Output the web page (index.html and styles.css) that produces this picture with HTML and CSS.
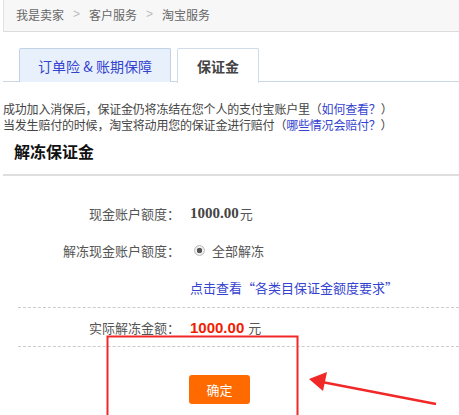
FILE: index.html
```html
<!DOCTYPE html>
<html lang="zh-CN">
<head>
<meta charset="utf-8">
<title>解冻保证金</title>
<link rel="stylesheet" href="styles.css">
</head>
<body>
<div class="page">
  <div class="crumbs">
    <span>我是卖家</span><span class="sep">&gt;</span><span>客户服务</span><span class="sep">&gt;</span><span>淘宝服务</span>
  </div>

  <div class="tabs">
    <div class="tab">订单险 &amp; 账期保障</div>
    <div class="tab active">保证金</div>
  </div>

  <div class="notice">
    <p>成功加入消保后，保证金仍将冻结在您个人的支付宝账户里（<a href="#">如何查看？</a>）</p>
    <p>当发生赔付的时候，淘宝将动用您的保证金进行赔付（<a href="#">哪些情况会赔付？</a>）</p>
  </div>

  <h2 class="title">解冻保证金</h2>

  <div class="form">
    <div class="row">
      <div class="label">现金账户额度：</div>
      <div class="value"><b class="amount">1000.00</b>元</div>
    </div>
    <div class="row">
      <div class="label">解冻现金账户额度：</div>
      <div class="value"><span class="radio"></span>全部解冻</div>
    </div>
    <div class="row link-row">
      <div class="label"></div>
      <div class="value"><a href="#">点击查看“各类目保证金额度要求”</a></div>
    </div>
    <div class="row total">
      <div class="label">实际解冻金额：</div>
      <div class="value"><b class="red">1000.00</b> 元</div>
    </div>
    <div class="actions">
      <button class="btn">确定</button>
    </div>
  </div>

  <svg class="mark" width="459" height="415" viewBox="0 0 459 415">
    <rect x="107.5" y="336.5" width="190" height="100" fill="none" stroke="#f02828" stroke-width="2"/>
    <line x1="436" y1="404" x2="322" y2="382" stroke="#f02828" stroke-width="2.5"/>
    <polygon points="309,379 327,372 323,391" fill="#f02828"/>
  </svg>
</div>
</body>
</html>
```

FILE: styles.css
```css
* { box-sizing: border-box; }

body {
  margin: 0;
  background: #fff;
  font-family: "Noto Sans CJK SC", "Noto Sans", sans-serif;
  font-size: 12px;
  color: #333;
  overflow: hidden;
}

a { color: #3443cf; text-decoration: none; }

.page {
  position: relative;
  width: 459px;
  height: 415px;
  overflow: hidden;
}

/* breadcrumb bar */
.crumbs {
  margin-left: 3px;
  height: 32px;
  background: #f7f7f7;
  border-left: 1px solid #e3e3e3;
  border-bottom: 1px solid #dcdcdc;
  display: flex;
  align-items: center;
  padding: 0 0 3px 12px;
  color: #666;
  font-size: 12px;
}
.crumbs .sep {
  color: #bbb;
  margin: 0 9px;
  font-family: "Liberation Sans", sans-serif;
}

/* tabs */
.tabs {
  margin: 16px 0 0 3px;
  padding-left: 16px;
  display: flex;
  gap: 6px;
  border-bottom: 1px solid #c9d6e3;
  height: 34px;
}
.tab {
  height: 34px;
  width: 152px;
  padding: 0;
  display: flex;
  align-items: center;
  justify-content: center;
  white-space: nowrap;
  border: 1px solid #c0d2e4;
  border-bottom: none;
  border-radius: 2px 2px 0 0;
  background: #e8f1fb;
  color: #3443cf;
  font-size: 14px;
}
.tab.active {
  width: 82px;
  background: #fff;
  color: #444;
  font-weight: bold;
  height: 35px;
  border-color: #cfdbe6;
}

/* notice text */
.notice {
  margin: 19px 0 0 3px;
  line-height: 16px;
  font-size: 12px;
  color: #444;
  letter-spacing: -0.2px;
}
.notice p { margin: 0; }

.title {
  margin: 7px 0 0 3px;
  padding: 0 0 12px 11px;
  font-size: 16px;
  line-height: 22px;
  color: #111;
  border-bottom: 2px solid #dedede;
}

/* form rows */
.form { margin-top: 27px; }
.row {
  display: grid;
  grid-template-columns: 180px 1fr;
  column-gap: 10px;
  align-items: center;
  height: 20px;
  margin-bottom: 17px;
  font-size: 13px;
  color: #555;
}
.label { text-align: right; }
.value { display: flex; align-items: center; }
.amount {
  font-family: "Liberation Serif", serif;
  font-size: 15px;
  color: #444;
  margin-right: 1px;
}
.radio {
  width: 11px;
  height: 11px;
  border: 1px solid #bbb;
  border-radius: 50%;
  background: radial-gradient(circle, #555 0 2.5px, #eee 3px);
  margin: 0 7px 0 4px;
}
.link-row { margin-top: 2px; margin-bottom: 10px; }
.link-row a { font-size: 13px; }

.total {
  margin-left: 18px;
  height: 40px;
  border-top: 1px dashed #ccc;
  border-bottom: 1px dashed #ccc;
  grid-template-columns: 162px 1fr;
  margin-bottom: 0;
}
.total .red {
  color: #f01e00;
  font-size: 15px;
  font-family: "Liberation Sans", sans-serif;
  margin-right: 4px;
}

.actions {
  padding: 28px 0 0 189px;
}
.btn {
  width: 61px;
  height: 29px;
  border: none;
  border-radius: 3px;
  background: #ff6a00;
  color: #fff;
  font-family: inherit;
  font-size: 13px;
  padding: 0;
}

/* red annotation drawn over the form */
.mark {
  position: absolute;
  left: 0;
  top: 0;
  pointer-events: none;
}
```
